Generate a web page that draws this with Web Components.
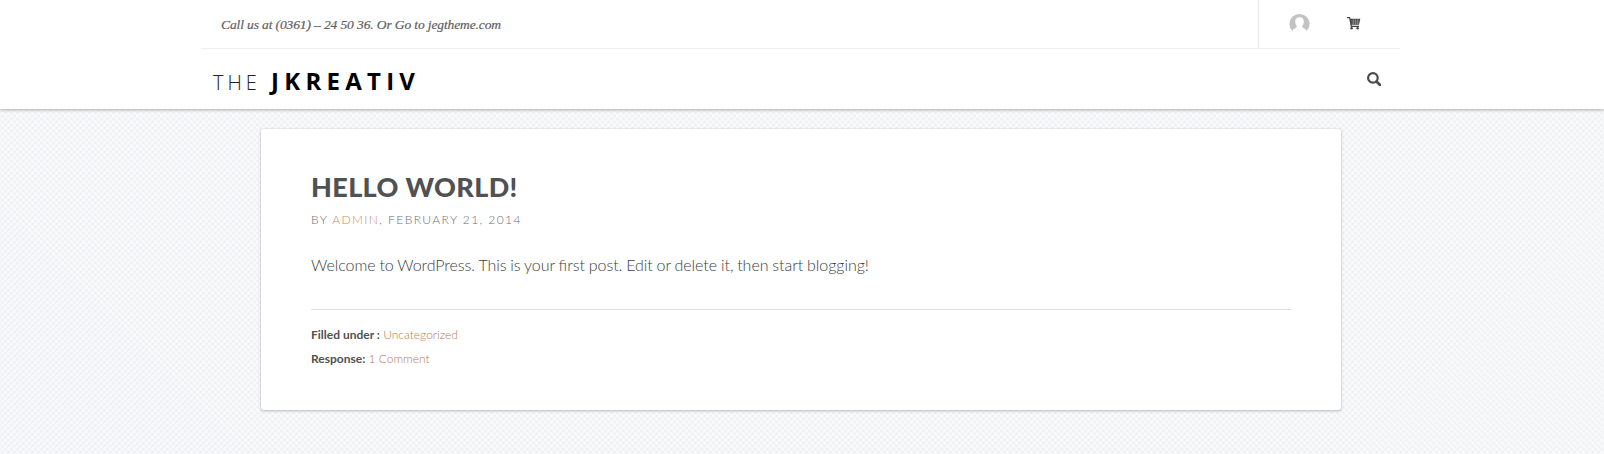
<!DOCTYPE html>
<html lang="en">
<head>
<meta charset="utf-8">
<title>Hello world! – The JKreativ</title>
<style>
  body {
    margin: 0; min-height: 454px; overflow: hidden;
    font-family: Lato, sans-serif; color: #505152;
    background-color: #f5f6f8;
    background-image:
      repeating-linear-gradient(45deg, rgba(255,255,255,.5) 0 1.4px, transparent 1.4px 4.243px),
      repeating-linear-gradient(-45deg, rgba(222,225,229,.32) 0 1.4px, transparent 1.4px 4.243px);
  }
</style>
</head>
<body>
<site-header>
  <contact-bar slot="top">Call us at (0361) – 24 50 36. Or Go to jegtheme.com</contact-bar>
  <site-logo slot="nav"><span slot="thin">THE</span><span slot="bold">JKREATIV</span></site-logo>
  <search-button slot="nav"></search-button>
</site-header>
<blog-post>
  <span slot="title">HELLO WORLD!</span>
  <post-meta slot="meta"><span slot="author">ADMIN</span><span slot="date">, FEBRUARY 21, 2014</span></post-meta>
  <span slot="body">Welcome to WordPress. This is your first post. Edit or delete it, then start blogging!</span>
  <post-fact slot="facts"><span slot="label">Filled under :</span>Uncategorized</post-fact>
  <post-fact slot="facts"><span slot="label">Response:</span>1 Comment</post-fact>
</blog-post>
<script>
const define = (name, html) => customElements.define(name, class extends HTMLElement {
  constructor() {
    super();
    this.attachShadow({ mode: 'open' }).innerHTML = html;
  }
});

define('site-header', `
<style>
  :host { display: block; height: 109px; background: #fff; box-shadow: 0 1px 3px rgba(0,0,0,.3); }
  .wrap { width: 1199px; margin-left: 201px; }
  .top { height: 48px; border-bottom: 1px solid #eeeeee; }
  .nav { height: 60px; display: flex; justify-content: space-between; }
</style>
<div class="wrap"><div class="top"><slot name="top"></slot></div>
<div class="nav"><slot name="nav"></slot></div></div>`);

define('contact-bar', `
<style>
  :host { display: flex; height: 48px; justify-content: space-between; }
  .text { padding-left: 20px; font: italic 13.5px/50px "Liberation Serif", serif; letter-spacing: -.12px; color: #606060; -webkit-text-stroke: .2px #606060; white-space: nowrap; }
  .tools { box-sizing: border-box; width: 142px; border-left: 1px solid #e8e8e8; display: flex; align-items: flex-start; padding: 13px 0 0 30px; }
  .cart { margin: 4px 0 0 37px; }
  svg { display: block; }
</style>
<div class="text"><slot></slot></div>
<div class="tools">
  <svg width="21" height="21" viewBox="0 0 21 21"><defs><clipPath id="c"><path d="M0 0H21V14L17.5 18H3.5L0 14Z"/></clipPath></defs>
    <g clip-path="url(#c)"><circle cx="10.5" cy="11" r="10.1" fill="#c3c3c3"/><path d="M10.5 4.3c-3 0-4.3 2-4.3 4.4 0 1.900.8 3.200 1.700 4.200L7.600 14.200 3.500 17V21H17.500V17L13.400 14.200 13.100 12.900c.9-1 1.700-2.300 1.700-4.200 0-2.400-1.300-4.400-4.300-4.400Z" fill="#fff"/></g></svg>
  <svg class="cart" width="14" height="13" viewBox="0 0 14 13"><path d="M0 0H3L3.600 1.700H13.300L12 7.700H4.700L4.900 8.800H12V9.900H3.800L2.200 1.300H0Z" fill="#454545"/><path d="M4.400 4H12.500M4.700 6H12M6.300 2V7.500M8.500 2V7.500M10.700 2V7.500" stroke="#b6b6b6" stroke-width=".45"/><circle cx="4.600" cy="11.300" r="1.200" fill="#454545"/><circle cx="10.600" cy="11.300" r="1.200" fill="#454545"/></svg>
</div>`);

define('site-logo', `
<style>
  :host { display: flex; align-items: baseline; padding: 15px 0 0 12px; line-height: 34px; color: #000; font-family: "Open Sans", sans-serif; }
  .thin { font-size: 20px; font-weight: 300; letter-spacing: 4px; width: 58px; color: #222; }
  .bold { font-size: 24px; font-weight: 700; letter-spacing: 5.25px; }
</style>
<span class="thin"><slot name="thin"></slot></span><span class="bold"><slot name="bold"></slot></span>`);

define('search-button', `
<style>:host { display: block; padding: 23px 19px 0 0; } svg { display: block; }</style>
<svg width="14" height="14" viewBox="0 0 14 14" fill="none" stroke="#4a4a4a"><circle cx="5.900" cy="5.900" r="4.800" stroke-width="2.200"/><path d="M9.500 9.500L13 13" stroke-width="2.700" stroke-linecap="round"/></svg>`);

define('blog-post', `
<style>
  :host { display: block; box-sizing: border-box; width: 1080px; height: 281px; margin: 20px 0 0 261px; padding: 0 50px; background: #fff; border-radius: 2px; box-shadow: 0 0 1px rgba(0,0,0,.25), 0 1px 3px rgba(0,0,0,.24); }
  h1 { margin: 0; padding-top: 38px; font-size: 27px; line-height: 40px; font-weight: 900; letter-spacing: .38px; white-space: nowrap; }
  .meta { height: 25px; line-height: 26px; }
  .body { padding-top: 18px; height: 59px; font-size: 16px; line-height: 30px; font-weight: 300; color: #3c3d3e; letter-spacing: -.045px; word-spacing: -.45px; font-feature-settings: "liga" 1; border-bottom: 1px solid #dcdddd; white-space: nowrap; }
  .facts { padding-top: 13px; }
</style>
<h1><slot name="title"></slot></h1>
<div class="meta"><slot name="meta"></slot></div>
<div class="body"><slot name="body"></slot></div>
<div class="facts"><slot name="facts"></slot></div>`);

define('post-meta', `
<style>
  :host { display: block; font-size: 12px; font-weight: 300; letter-spacing: 1.42px; color: #6c6e71; white-space: nowrap; }
  a { color: #bf8c60; }
</style>BY <a><slot name="author"></slot></a><slot name="date"></slot>`);

define('post-fact', `
<style>
  :host { display: block; font-size: 12px; line-height: 24px; font-weight: 300; color: #b37d4c; }
  b { font-weight: 700; color: #505152; }
</style><b><slot name="label"></slot></b> <slot></slot>`);
</script>
</body>
</html>
